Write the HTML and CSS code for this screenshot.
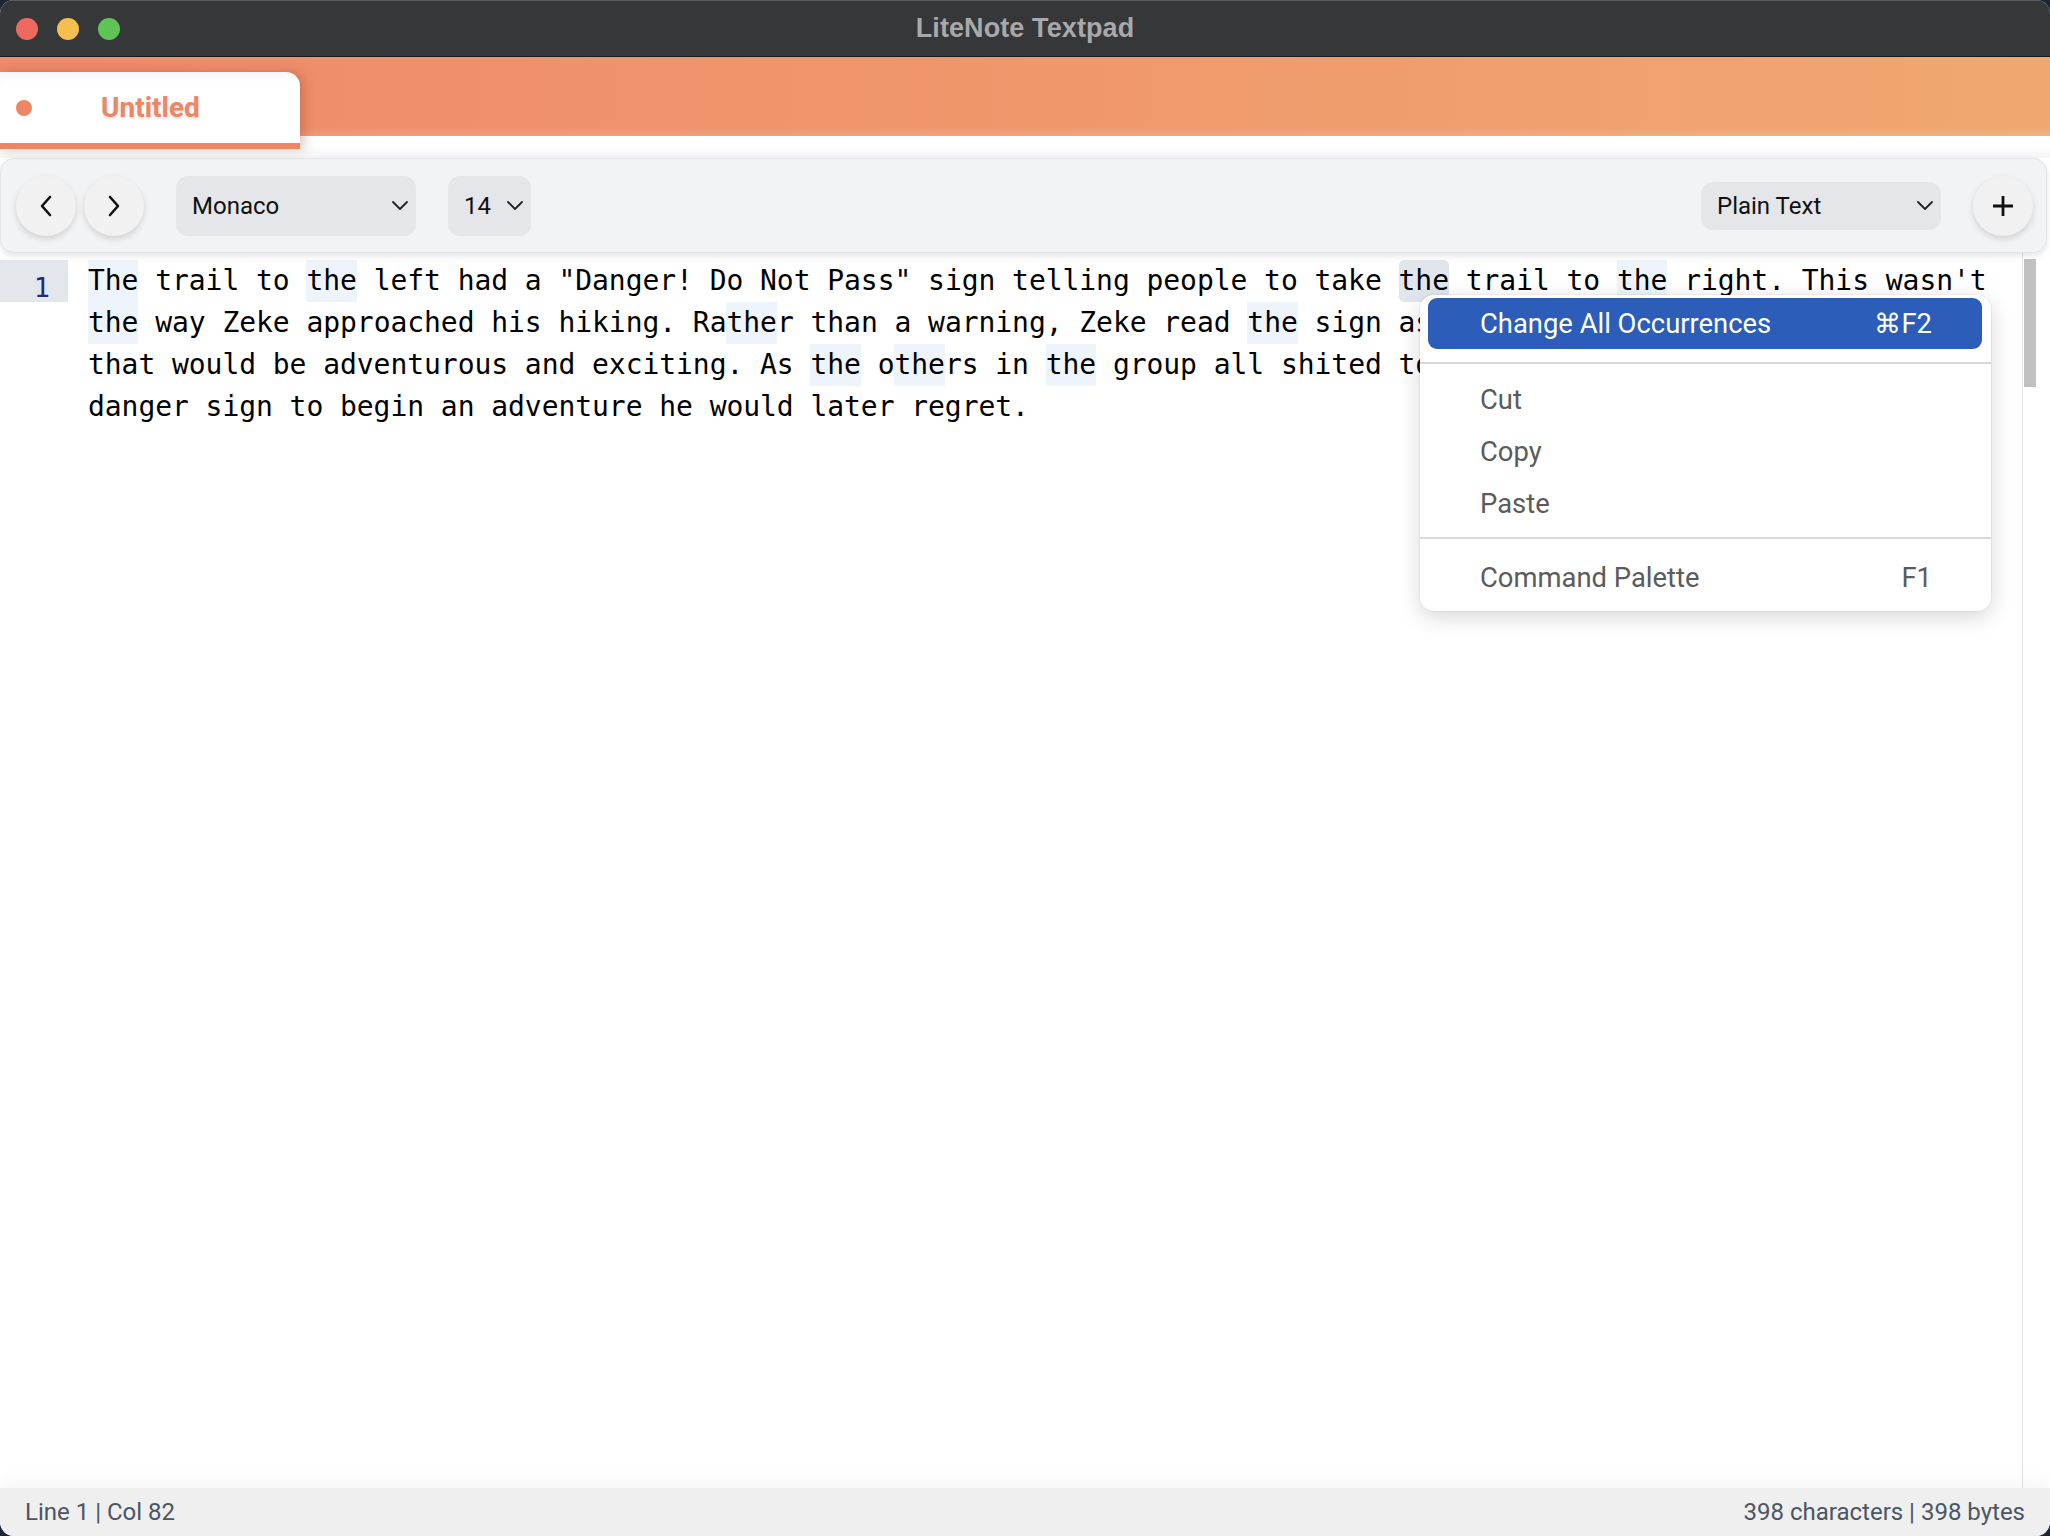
FILE: index.html
```html
<!DOCTYPE html>
<html lang="en">
<head>
<meta charset="utf-8">
<title>LiteNote Textpad</title>
<link rel="stylesheet" href="styles.css">
</head>
<body>
<div class="window">
  <header class="titlebar">
    <div class="lights">
      <span class="light red"></span>
      <span class="light yellow"></span>
      <span class="light green"></span>
    </div>
    <div class="title">LiteNote Textpad</div>
    <div></div>
  </header>

  <div class="tabstrip">
    <div class="tab">
      <span class="tab-dot"></span>
      <span class="tab-name">Untitled</span>
    </div>
  </div>

  <div class="toolbar">
    <div class="tool-group">
      <button class="round-btn" aria-label="Back">
        <svg width="12" height="22" viewBox="0 0 12 22"><path d="M10 2 L2 11 L10 20" fill="none" stroke="#111" stroke-width="2.6" stroke-linecap="round" stroke-linejoin="round"/></svg>
      </button>
      <button class="round-btn" aria-label="Forward">
        <svg width="12" height="22" viewBox="0 0 12 22"><path d="M2 2 L10 11 L2 20" fill="none" stroke="#111" stroke-width="2.6" stroke-linecap="round" stroke-linejoin="round"/></svg>
      </button>
      <div class="select font-select">
        <span>Monaco</span>
        <svg class="chev" width="16" height="9" viewBox="0 0 16 9"><path d="M1 1 L8 8 L15 1" fill="none" stroke="#222" stroke-width="1.8" stroke-linecap="round" stroke-linejoin="round"/></svg>
      </div>
      <div class="select size-select">
        <span>14</span>
        <svg class="chev" width="16" height="9" viewBox="0 0 16 9"><path d="M1 1 L8 8 L15 1" fill="none" stroke="#222" stroke-width="1.8" stroke-linecap="round" stroke-linejoin="round"/></svg>
      </div>
    </div>
    <div class="tool-group">
      <div class="select lang-select">
        <span>Plain Text</span>
        <svg class="chev" width="16" height="9" viewBox="0 0 16 9"><path d="M1 1 L8 8 L15 1" fill="none" stroke="#222" stroke-width="1.8" stroke-linecap="round" stroke-linejoin="round"/></svg>
      </div>
      <button class="round-btn" aria-label="New">
        <svg width="22" height="22" viewBox="0 0 22 22"><path d="M11 1 V21 M1 11 H21" fill="none" stroke="#111" stroke-width="2.8"/></svg>
      </button>
    </div>
  </div>

  <main class="editor">
    <div class="gutter">
      <div class="line-no active">1</div>
    </div>
    <div class="content"><span class="hl">The</span> trail to <span class="hl">the</span> left had a "Danger! Do Not Pass" sign telling people to take <span class="sel">the</span> trail to <span class="hl">the</span> right. This wasn't <span class="hl">the</span> way Zeke approached his hiking. Ra<span class="hl">the</span>r than a warning, Zeke read <span class="hl">the</span> sign as an invitation to explore an area that would be adventurous and exciting. As <span class="hl">the</span> o<span class="hl">the</span>rs in <span class="hl">the</span> group all shited to <span class="hl">the</span> right, Zeke slipped past <span class="hl">the</span> danger sign to begin an adventure he would later regret.</div>
    <div class="scrollbar"><div class="thumb"></div></div>

    <div class="context-menu">
      <div class="menu-item active"><span>Change All Occurrences</span><span class="shortcut">⌘F2</span></div>
      <div class="menu-sep first"></div>
      <div class="menu-item"><span>Cut</span></div>
      <div class="menu-item"><span>Copy</span></div>
      <div class="menu-item"><span>Paste</span></div>
      <div class="menu-sep second"></div>
      <div class="menu-item"><span>Command Palette</span><span class="shortcut">F1</span></div>
    </div>
  </main>

  <footer class="statusbar">
    <span>Line 1 | Col 82</span>
    <span>398 characters | 398 bytes</span>
  </footer>
</div>
</body>
</html>
```

FILE: styles.css
```css
* { box-sizing: border-box; }

html, body {
  margin: 0;
  padding: 0;
  background: #1b2735;
}

.window {
  width: 2050px;
  height: 1536px;
  display: flex;
  flex-direction: column;
  background: #ffffff;
  border-radius: 14px;
  overflow: hidden;
  font-family: Roboto, "Noto Sans", sans-serif;
}

/* Title bar */
.titlebar {
  height: 57px;
  flex: 0 0 57px;
  background: #363739;
  border-top: 1px solid #5c5c5e;
  border-bottom: 1px solid #1a1a1b;
  display: grid;
  grid-template-columns: 1fr auto 1fr;
  align-items: center;
}

.lights {
  display: flex;
  gap: 19px;
  padding-left: 16px;
}

.light {
  width: 22px;
  height: 22px;
  border-radius: 50%;
  display: block;
}
.light.red { background: #ee6a5f; }
.light.yellow { background: #f5be4f; }
.light.green { background: #60c454; }

.title {
  font-family: "Liberation Sans", Arial, sans-serif;
  font-weight: 700;
  font-size: 27px;
  color: #a9a9ab;
  letter-spacing: 0.1px;
}

/* Tab strip */
.tabstrip {
  height: 101px;
  flex: 0 0 101px;
  background:
    linear-gradient(180deg, rgba(255,255,255,0) 0, rgba(255,255,255,0) 70px, rgba(255,255,255,0.12) 79px) no-repeat 0 0 / 100% 79px,
    linear-gradient(90deg, #ef8a6a 0%, #f0976c 50%, #f0a870 100%) no-repeat 0 0 / 100% 79px,
    linear-gradient(180deg, #ffffff 0, #ffffff 88px, #f4f4f6 101px);
  display: flex;
  align-items: flex-start;
}

.tab {
  margin-top: 15px;
  width: 300px;
  height: 77px;
  background: #ffffff;
  border-radius: 0 14px 0 0;
  border-bottom: 6px solid #ee8565;
  box-shadow: 4px 0 12px rgba(120, 50, 20, 0.28), inset 0 10px 14px -10px rgba(0,0,0,0.08);
  display: flex;
  align-items: center;
  position: relative;
  z-index: 2;
}

.tab-dot {
  width: 16px;
  height: 16px;
  border-radius: 50%;
  background: #ee8565;
  margin-left: 16px;
}

.tab-name {
  margin-left: 69px;
  font-family: Roboto, sans-serif;
  font-weight: 700;
  font-size: 28px;
  color: #ee8565;
  text-shadow: 0 2px 3px rgba(0,0,0,0.12);
}

/* Toolbar */
.toolbar {
  height: 95px;
  flex: 0 0 95px;
  margin-right: 3px;
  background: #f2f3f5;
  border: 1px solid #e3e4e7;
  border-radius: 14px;
  box-shadow: 0 3px 6px rgba(0,0,0,0.10);
  display: flex;
  align-items: center;
  justify-content: space-between;
  padding: 0 13px 0 15px;
  position: relative;
  z-index: 1;
}

.tool-group {
  display: flex;
  align-items: center;
}

.round-btn {
  width: 60px;
  height: 60px;
  border: none;
  border-radius: 50%;
  background: #f1f1f2;
  box-shadow: 0 3px 6px rgba(0,0,0,0.14);
  display: flex;
  align-items: center;
  justify-content: center;
  padding: 0;
}
.round-btn + .round-btn { margin-left: 8px; }

.select {
  height: 60px;
  background: #e5e6e9;
  border-radius: 12px;
  display: flex;
  align-items: center;
  justify-content: space-between;
  font-family: Roboto, sans-serif;
  font-size: 24px;
  color: #111111;
  padding: 0 8px 0 16px;
}

.font-select { width: 240px; margin-left: 32px; }
.size-select { width: 83px; margin-left: 32px; padding-right: 8px; }
.lang-select { width: 240px; height: 48px; margin-right: 32px; padding-right: 8px; }

/* Editor */
.editor {
  flex: 1 1 auto;
  position: relative;
  display: flex;
  padding-top: 7px;
  background: #ffffff;
}

.gutter {
  width: 68px;
  flex: 0 0 68px;
}

.line-no {
  height: 42px;
  line-height: 42px;
  padding-top: 7px;
  text-align: right;
  padding-right: 18px;
  font-family: "DejaVu Sans Mono", monospace;
  font-size: 27px;
  color: #1c2c78;
}
.line-no.active { background: #e3e6ea; }

.content {
  flex: 1 1 auto;
  padding-left: 20px;
  font-family: "DejaVu Sans Mono", "Liberation Mono", monospace;
  font-size: 28px;
  letter-spacing: -0.056px;
  line-height: 42px;
  color: #000000;
  white-space: pre-wrap;
  word-break: normal;
}

.hl,
.sel {
  display: inline-block;
  height: 42px;
  line-height: 42px;
  background: #eef4fb;
}

.sel {
  background: #e1e6ed;
  border-radius: 5px;
}

.scrollbar {
  width: 16px;
  flex: 0 0 16px;
  margin-right: 12px;
  margin-top: -7px;
  border-left: 1px solid #e4e4e4;
  padding: 6px 1px 0 1px;
}

.thumb {
  width: 12px;
  height: 128px;
  background: #c1c1c1;
}

/* Context menu */
.context-menu {
  position: absolute;
  left: 1420px;
  top: 42px;
  width: 571px;
  background: #ffffff;
  border-radius: 14px;
  box-shadow: 0 6px 22px rgba(0,0,0,0.16), 0 0 0 1px rgba(0,0,0,0.04);
  padding: 3px 9px 7px 8px;
  font-family: Roboto, sans-serif;
  font-size: 27.4px;
  color: #5b5b5b;
  z-index: 5;
}

.menu-item {
  height: 52px;
  display: flex;
  align-items: center;
  justify-content: space-between;
  padding: 0 50px 0 52px;
}

.menu-item.active {
  height: 51px;
  background: #2b5db9;
  color: #ffffff;
  border-radius: 9px;
}

.menu-sep {
  height: 2px;
  background: #d9d9d9;
  margin-left: -8px;
  margin-right: -9px;
}
.menu-sep.first { margin-top: 13px; margin-bottom: 10px; }
.menu-sep.second { margin-top: 7px; margin-bottom: 13px; }

/* Status bar */
.statusbar {
  height: 48px;
  flex: 0 0 48px;
  background: #efefef;
  box-shadow: 0 -8px 18px rgba(0,0,0,0.035);
  display: flex;
  align-items: center;
  justify-content: space-between;
  padding: 0 25px 0 25px;
  font-family: Roboto, sans-serif;
  font-size: 24px;
  color: #4b5563;
  position: relative;
}
```
